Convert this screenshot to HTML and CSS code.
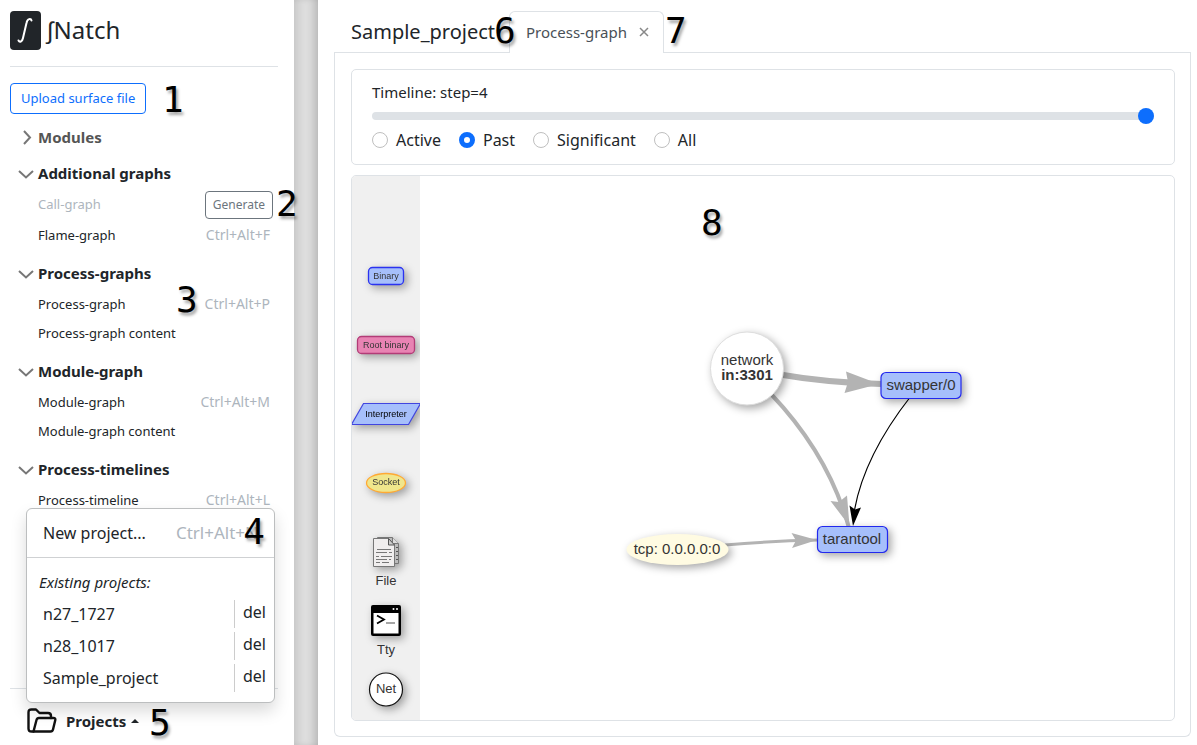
FILE: index.html
```html
<!DOCTYPE html>
<html lang="en">
<head>
<meta charset="utf-8">
<title>∫Natch</title>
<link rel="stylesheet" href="styles.css">
</head>
<body>
<div class="app">
  <aside class="sidebar">
    <header class="brand">
      <span class="brand-logo"><svg width="31" height="39" viewBox="0 0 31 39" aria-hidden="true"><path d="M21.500 9.500C21 7.500 17.500 7 16.500 12L13 27C12.300 31 9.500 31.500 8.500 29.500" fill="none" stroke="#fff" stroke-width="2" stroke-linecap="round"/></svg></span>
      <span class="brand-name">∫Natch</span>
    </header>
    <div class="upload"><button class="btn btn-primary" type="button">Upload surface file</button><span class="mark mark-1">1</span></div>
    <nav class="menu">
      <section class="group group-closed">
        <button class="group-head" type="button"><svg class="chevron" viewBox="0 0 16 16"><path d="M6 2l6 6.500-6 6.500"/></svg>Modules</button>
      </section>
      <section class="group">
        <button class="group-head" type="button"><svg class="chevron" viewBox="0 0 16 16"><path d="M1 6l7 6.500 7-6.500"/></svg>Additional graphs</button>
        <div class="item item-action"><span class="muted">Call-graph</span><button class="btn btn-small" type="button">Generate</button><span class="mark mark-2">2</span></div>
        <a class="item" href="#flame">Flame-graph<kbd>Ctrl+Alt+F</kbd></a>
      </section>
      <section class="group">
        <button class="group-head" type="button"><svg class="chevron" viewBox="0 0 16 16"><path d="M1 6l7 6.500 7-6.500"/></svg>Process-graphs</button>
        <a class="item" href="#process">Process-graph<kbd>Ctrl+Alt+P</kbd><span class="mark mark-3">3</span></a>
        <a class="item" href="#process-content">Process-graph content</a>
      </section>
      <section class="group">
        <button class="group-head" type="button"><svg class="chevron" viewBox="0 0 16 16"><path d="M1 6l7 6.500 7-6.500"/></svg>Module-graph</button>
        <a class="item" href="#module">Module-graph<kbd>Ctrl+Alt+M</kbd></a>
        <a class="item" href="#module-content">Module-graph content</a>
      </section>
      <section class="group">
        <button class="group-head" type="button"><svg class="chevron" viewBox="0 0 16 16"><path d="M1 6l7 6.500 7-6.500"/></svg>Process-timelines</button>
        <a class="item" href="#timeline">Process-timeline<kbd>Ctrl+Alt+L</kbd></a>
      </section>
    </nav>
    <footer class="projects">
      <button class="projects-toggle" type="button">
        <svg width="30" height="26" viewBox="0 0 30 26" fill="none" stroke="#111" stroke-width="2.400" stroke-linejoin="round" stroke-linecap="round" aria-hidden="true"><path d="M6.500 23.500H4.500Q1.500 23.500 1.500 20.500V4.500Q1.500 1.500 4.500 1.500H9L12.500 5H21Q24 5 24 8V10"/><path d="M6.500 23.500L9.500 12Q10 10 12 10H26.500Q28.800 10 28.300 12L26 21.500Q25.500 23.500 23.500 23.500Z"/></svg>
        <span>Projects</span>
        <svg width="10" height="6" viewBox="0 0 10 6" aria-hidden="true"><path d="M1 5L5 1L9 5Z" fill="#212529"/></svg>
      </button>
      <span class="mark mark-5">5</span>
      <div class="popup">
        <a class="popup-item popup-new" href="#new">New project...<kbd>Ctrl+Alt+N</kbd></a>
        <span class="mark mark-4">4</span>
        <hr class="popup-line">
        <div class="popup-title">Existing projects:</div>
        <div class="popup-row"><a class="popup-item" href="#n27">n27_1727</a><button class="del" type="button">del</button></div>
        <div class="popup-row"><a class="popup-item" href="#n28">n28_1017</a><button class="del" type="button">del</button></div>
        <div class="popup-row"><a class="popup-item" href="#sample">Sample_project</a><button class="del" type="button">del</button></div>
      </div>
    </footer>
  </aside>
  <div class="splitter"></div>
  <main class="main">
    <div class="tabs">
      <h1 class="project-name">Sample_project</h1>
      <div class="tab"><a href="#process-tab">Process-graph</a><button class="tab-close" type="button" aria-label="Close"><svg width="10" height="10" viewBox="0 0 10 10"><path d="M1 1L9 9M9 1L1 9" stroke="#888" stroke-width="1.500"/></svg></button></div>
      <span class="mark mark-6">6</span>
      <span class="mark mark-7">7</span>
    </div>
    <div class="panel">
      <section class="card timeline">
        <label class="timeline-label" for="step">Timeline: step=4</label>
        <input class="range" id="step" type="range" min="0" max="4" value="4">
        <div class="radios">
          <label class="radio"><input type="radio" name="mode">Active</label>
          <label class="radio"><input type="radio" name="mode" checked>Past</label>
          <label class="radio"><input type="radio" name="mode">Significant</label>
          <label class="radio"><input type="radio" name="mode">All</label>
        </div>
      </section>
      <section class="card graph">
        <div class="legend">
          <svg class="legend-art" viewBox="352 176 68 544" role="img" aria-label="Legend">
            <g class="node">
              <rect x="368.500" y="267.500" width="35" height="17" rx="4" fill="#a6bffb" stroke="#2b32f0" stroke-width="1.300"/>
              <text class="tiny" x="386" y="279">Binary</text>
            </g>
            <g class="node">
              <rect x="357.500" y="336.500" width="57" height="17" rx="4" fill="#e883b3" stroke="#b23c77" stroke-width="1.300"/>
              <text class="tiny" x="386" y="348">Root binary</text>
            </g>
            <g class="node">
              <path d="M363.500 403.500H420.500L408.500 424.500H351.500Z" fill="#a6bffb" stroke="#4145e0" stroke-width="1.200"/>
              <text class="tiny dark" x="386" y="417">Interpreter</text>
            </g>
            <g class="node">
              <ellipse cx="386" cy="483" rx="19.500" ry="9.500" fill="#f0e68c" stroke="#ffa933" stroke-width="1.300"/>
              <text class="tiny" x="386" y="485">Socket</text>
            </g>
            <g class="node" stroke="#777">
              <path d="M377.500 537.500H392.500L398.500 543.500V563.500H377.500Z" fill="#bbb"/>
              <path d="M392.500 537.500V543.500H398.500" fill="#ddd"/>
              <path d="M373.500 538.500H388.500L394.500 545V566.500H373.500Z" fill="#f0eeee"/>
              <path d="M388.500 538.500V545H394.500Z" fill="#ccc" stroke="#555"/>
              <path d="M377 549.500H391M376 552.500H387M389 552.500H392M376 556.500H379M381 556.500H392M376 559.500H387M389 559.500H391M376 562.500H380M382 562.500H389" fill="none"/>
              <path d="M396 547.500H398M396 551.500H398M396 555.500H398M396 559.500H398" stroke="#555"/>
            </g>
            <text class="small" x="386" y="585">File</text>
            <g class="node">
              <rect x="371" y="605" width="30" height="31" rx="2" fill="#000"/>
              <rect x="373.500" y="613" width="25" height="20.500" fill="#fff"/>
              <circle cx="393.500" cy="609" r="1" fill="#fff"/><circle cx="397" cy="609" r="1" fill="#fff"/>
              <path d="M377 615.500L384 619.500L377 623.500" fill="none" stroke="#000" stroke-width="1.800"/>
              <path d="M386 623H395" stroke="#888" stroke-width="1.500"/>
            </g>
            <text class="small" x="386" y="654">Tty</text>
            <circle class="node" cx="386" cy="689.500" r="16.500" fill="#fff" stroke="#111" stroke-width="1.200"/>
            <text class="small" x="386" y="693">Net</text>
          </svg>
        </div>
        <div class="canvas">
          <svg class="canvas-art" viewBox="420 176 754 544" preserveAspectRatio="xMinYMin meet" role="img" aria-label="Process graph">
            <g fill="none" stroke="#b3b3b3">
              <path d="M780 374.500Q825 382.500 882 384" stroke-width="6"/>
              <path d="M771 394Q829 455 849 528" stroke-width="4"/>
              <path d="M725 545Q770 541 818 540" stroke-width="3"/>
              <path d="M911 396Q860 461 853 520" stroke="#000" stroke-width="1.200"/>
            </g>
            <path d="M846 371.500L879 384L844.500 393L848 382Z" fill="#b3b3b3"/>
            <path d="M830.500 501L839 502L847 495.500L849.500 526Z" fill="#b3b3b3"/>
            <path d="M791.500 533L817 540L792 548L796 540.500Z" fill="#b3b3b3"/>
            <path d="M849.500 505.500L855 509.500L861 507.500L853 526Z" fill="#000"/>
            <circle class="node" cx="747" cy="368.500" r="36.500" fill="#fff" stroke="#ddd"/>
            <text class="label" x="747" y="365">network</text>
            <text class="label bold" x="747" y="380">in:3301</text>
            <rect class="node" x="881" y="372.500" width="80" height="26" rx="5" fill="#a6bffb" stroke="#2228ee" stroke-width="1.200"/>
            <text class="label" x="921" y="390">swapper/0</text>
            <rect class="node" x="817.500" y="526.500" width="70" height="26" rx="5" fill="#a6bffb" stroke="#2228ee" stroke-width="1.200"/>
            <text class="label" x="852" y="544">tarantool</text>
            <ellipse class="node" cx="677.500" cy="549.500" rx="51" ry="15.500" fill="#fffbe2"/>
            <text class="label" x="677" y="554">tcp: 0.0.0.0:0</text>
          </svg>
          <span class="mark mark-8">8</span>
        </div>
      </section>
    </div>
  </main>
</div>
</body>
</html>
```
FILE: styles.css
```css
* { box-sizing: border-box; }
body {
  margin: 0;
  background: #fff;
  color: #212529;
  font: 16px/24px "Noto Sans", sans-serif;
}
button { font: inherit; color: inherit; background: none; border: 0; padding: 0; cursor: pointer; }
a { color: inherit; text-decoration: none; }
kbd { font: inherit; color: #adb5bd; }

.app { display: flex; height: 100vh; }

.sidebar {
  display: flex;
  flex-direction: column;
  flex: 0 0 294px;
  padding: 0 16px 0 10px;
}
.brand {
  display: flex;
  align-items: center;
  gap: 6px;
  height: 67px;
  padding-bottom: 6px;
  border-bottom: 1px solid #dee2e6;
  font-size: 24px;
}
.brand-logo { display: flex; background: #212529; border-radius: 4px; }
.upload { position: relative; padding: 16px 0 8px; display: flex; }
.btn { border: 1px solid #0d6efd; border-radius: 4px; }
.btn-primary { height: 31px; padding: 0 10px 2px; color: #0d6efd; font-size: 13px; }
.btn-small { height: 28px; padding: 0 7px; border-color: #6c757d; color: #6c757d; font-size: 12px; margin-right: -3px; }

.menu { flex: 1; min-height: 0; }
.group { margin-bottom: 7px; }
.group-head { display: flex; align-items: center; gap: 4px; width: 100%; height: 33px; padding-left: 8px; font-size: 15px; font-weight: 700; }
.group-closed { margin-bottom: 5px; }
.group-closed .group-head { height: 29px; color: #555; }
.chevron { width: 16px; height: 16px; fill: none; stroke: #777; stroke-width: 2; }
.item {
  position: relative;
  display: flex;
  align-items: center;
  justify-content: space-between;
  height: 29px;
  padding: 0 8px 0 28px;
  font-size: 13px;
}
.item kbd { font-size: 14px; }
.item-action { height: 31px; }
.muted { color: #adb5bd; padding-bottom: 2px; }

.projects { position: relative; height: 57px; padding: 8px 16px 0; border-top: 1px solid #dee2e6; }
.projects-toggle { display: flex; align-items: center; gap: 9px; height: 48px; padding-left: 1px; font-size: 15px; font-weight: 700; }
.projects-toggle span { margin-right: -5px; }
.popup {
  position: absolute;
  left: 16px;
  right: 3px;
  bottom: 42px;
  padding: 8px 0;
  background: #fff;
  border: 1px solid #bcbebf;
  border-radius: 6px;
  box-shadow: 0 8px 16px rgba(0, 0, 0, .15);
}
.popup-item { display: flex; flex: 1; align-items: center; justify-content: space-between; height: 32px; padding: 0 16px; }
.popup-new kbd { font-size: 17px; }
.popup-line { margin: 8px 0; border: 0; border-top: 1px solid #cfd1d3; }
.popup-title { padding: 4px 12px; font-size: 15px; font-style: italic; }
.popup-row { display: flex; align-items: flex-start; }
.del { height: 28px; margin-top: 2px; padding: 0 8px 4px; border-left: 1px solid #ccc; font-size: 16px; }

.splitter {
  flex: 0 0 24px;
  background: #dedede;
  box-shadow: inset 8px 0 10px -5px rgba(0, 0, 0, .12), inset -8px 0 10px -5px rgba(0, 0, 0, .2);
}

.main { display: flex; flex-direction: column; flex: 1; min-width: 0; padding: 11px 6px 8px 16px; }
.tabs { position: relative; display: flex; align-items: center; height: 42px; border-bottom: 1px solid #dee2e6; }
.project-name { width: 175px; margin: 0; padding-left: 17px; font-size: 20px; font-weight: 400; white-space: nowrap; }
.tab {
  display: flex;
  align-items: center;
  gap: 12px;
  align-self: stretch;
  margin-bottom: -1px;
  padding: 0 14px 2px 16px;
  background: #fff;
  border: 1px solid #dee2e6;
  border-bottom: 0;
  border-radius: 6px 6px 0 0;
  color: #495057;
  font-size: 15px;
}
.tab-close { display: flex; }
.panel {
  display: flex;
  flex-direction: column;
  flex: 1;
  gap: 10px;
  min-height: 0;
  padding: 16px 15px 15px 16px;
  border: 1px solid #dee2e6;
  border-top: 0;
  border-radius: 0 0 6px 6px;
}
.card { border: 1px solid #dee2e6; border-radius: 5px; }
.timeline { display: flex; flex-direction: column; padding: 10px 20px 12px; }
.timeline-label { font-size: 15px; }
.range { appearance: none; width: 100%; height: 24px; margin: 0; background: none; }
.range::-webkit-slider-runnable-track { height: 8px; border-radius: 4px; background: #dee2e6; }
.range::-webkit-slider-thumb { appearance: none; width: 16px; height: 16px; margin-top: -4px; border-radius: 50%; background: #0d6efd; }
.radios { display: flex; gap: 18px; }
.radio { display: flex; align-items: center; gap: 8px; }
.radio input { appearance: none; width: 16px; height: 16px; margin: 0; border: 1px solid #bfbfbf; border-radius: 50%; background: #fff; }
.radio input:checked { border: 5px solid #0d6efd; }

.graph { display: flex; flex: 1; min-height: 0; overflow: hidden; }
.legend { flex: 0 0 68px; background: #f0f0f0; }
.legend-art, .canvas-art { display: block; width: 100%; }
.canvas { position: relative; flex: 1; min-width: 0; }
.node { filter: drop-shadow(3px 3px 4px rgba(0, 0, 0, .35)); }
.tiny, .small, .label { font-family: "Liberation Sans", sans-serif; text-anchor: middle; fill: #343434; }
.tiny { font-size: 9px; }
.dark { fill: #000; }
.small { font-size: 13px; }
.label { font-size: 15px; }
.bold { font-weight: 700; }

.mark {
  position: absolute;
  color: #000;
  font: 36px/36px "DejaVu Sans Mono", monospace;
  text-shadow: 2px 3px 3px rgba(0, 0, 0, .35);
  z-index: 2;
}
.mark-1 { left: 152px; top: 15px; }
.mark-2 { left: 266px; top: -3px; }
.mark-3 { left: 166px; top: -7px; }
.mark-4 { right: 9px; top: 5px; }
.mark-5 { left: 139px; top: 16px; }
.mark-6 { left: 160px; top: 2px; }
.mark-7 { left: 331px; top: 2px; }
.mark-8 { left: 281px; top: 29px; }
```
